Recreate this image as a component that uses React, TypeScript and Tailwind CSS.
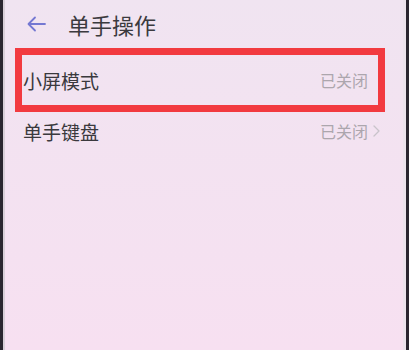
import React from "react";

export default function App() {
  const font = { fontFamily: '"Noto Sans CJK SC", "Noto Sans", sans-serif' };
  return (
    <div className="w-[409px] h-[350px] flex bg-[#f6e1f0] overflow-hidden" style={font}>
      <div className="w-[3px] h-full bg-[#2a2630]" />
      <div className="w-[2px] h-full bg-[#d8cfd8]" />
      <div className="flex-1 flex flex-col bg-gradient-to-b from-[#f0e4f1] to-[#f7e0f1]">
        <div className="h-[48px] flex items-center pl-[22px]">
          <svg width="19" height="16" viewBox="0 0 19 16" fill="none" stroke="#7478d2" strokeWidth="1.8" strokeLinecap="round" strokeLinejoin="round">
            <path d="M18 8H2M8 1.5L1.5 8L8 14.5" />
          </svg>
          <span className="ml-[22px] text-[22px] leading-none text-[#3b3a3e]">单手操作</span>
        </div>
        <div className="ml-[10px] w-[370px] h-[64px] border-[7px] border-[#f23a40] flex items-center justify-between pl-[1px] pr-[10px]">
          <span className="text-[19px] leading-none text-[#3a393d]">小屏模式</span>
          <span className="text-[16px] leading-none text-[#aca6ad]">已关闭</span>
        </div>
        <div className="h-[38px] flex items-center justify-between pl-[18px] pr-[23px]">
          <span className="text-[19px] leading-none text-[#3a393d]">单手键盘</span>
          <span className="flex items-center gap-[5px]">
            <span className="text-[16px] leading-none text-[#aca6ad]">已关闭</span>
            <svg width="7" height="12" viewBox="0 0 7 12" fill="none" stroke="#c9c3ca" strokeWidth="1.3" strokeLinecap="round" strokeLinejoin="round">
              <path d="M1 1L6 6L1 11" />
            </svg>
          </span>
        </div>
      </div>
      <div className="w-[3px] h-full bg-[#ece3ec]" />
      <div className="w-[3px] h-full bg-[#2a2630]" />
    </div>
  );
}
